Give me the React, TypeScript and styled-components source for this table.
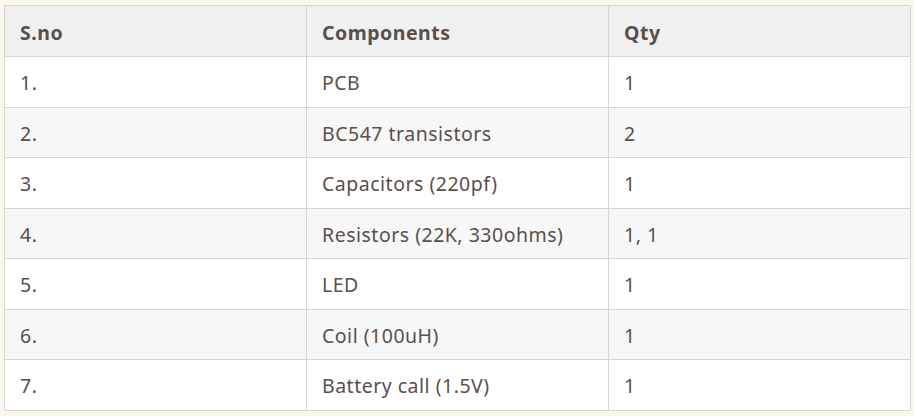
import React from "react";
import styled, { createGlobalStyle } from "styled-components";

const Global = createGlobalStyle`
  html, body { margin: 0; padding: 0; background: #fbf6ee; }
  body { font-family: "Noto Sans", "Open Sans", sans-serif; }
`;

const Page = styled.div`
  padding: 5px 3px 5px 4px;
`;

const Table = styled.table`
  width: 907px;
  border-collapse: collapse;
  border: 1px solid #d6d6d6;
  color: #5b4f4b;
  font-size: 19.5px;
  letter-spacing: 0.5px;
  table-layout: fixed;
`;

const Head = styled.th<{ $w?: number }>`
  background: #f0f0f0;
  text-align: left;
  font-weight: 700;
  height: 51px;
  padding: 2px 0 0 15px;
  border: 1px solid #d6d6d6;
  width: ${(p) => (p.$w ? `${p.$w}px` : "auto")};
  box-sizing: border-box;
`;

const Row = styled.tr<{ $alt: boolean }>`
  background: ${(p) => (p.$alt ? "#f7f7f7" : "#ffffff")};
`;

const Cell = styled.td`
  height: 50.5px;
  padding: 2px 0 0 15px;
  border: 1px solid #d6d6d6;
  box-sizing: border-box;
`;

const rows: [string, string, string][] = [
  ["1.", "PCB", "1"],
  ["2.", "BC547 transistors", "2"],
  ["3.", "Capacitors (220pf)", "1"],
  ["4.", "Resistors (22K, 330ohms)", "1, 1"],
  ["5.", "LED", "1"],
  ["6.", "Coil (100uH)", "1"],
  ["7.", "Battery call (1.5V)", "1"],
];

export default function App() {
  return (
    <Page>
      <Global />
      <Table>
        <thead>
          <tr>
            <Head $w={302}>S.no</Head>
            <Head $w={302}>Components</Head>
            <Head>Qty</Head>
          </tr>
        </thead>
        <tbody>
          {rows.map((r, i) => (
            <Row key={i} $alt={i % 2 === 1}>
              <Cell>{r[0]}</Cell>
              <Cell>{r[1]}</Cell>
              <Cell>{r[2]}</Cell>
            </Row>
          ))}
        </tbody>
      </Table>
    </Page>
  );
}
